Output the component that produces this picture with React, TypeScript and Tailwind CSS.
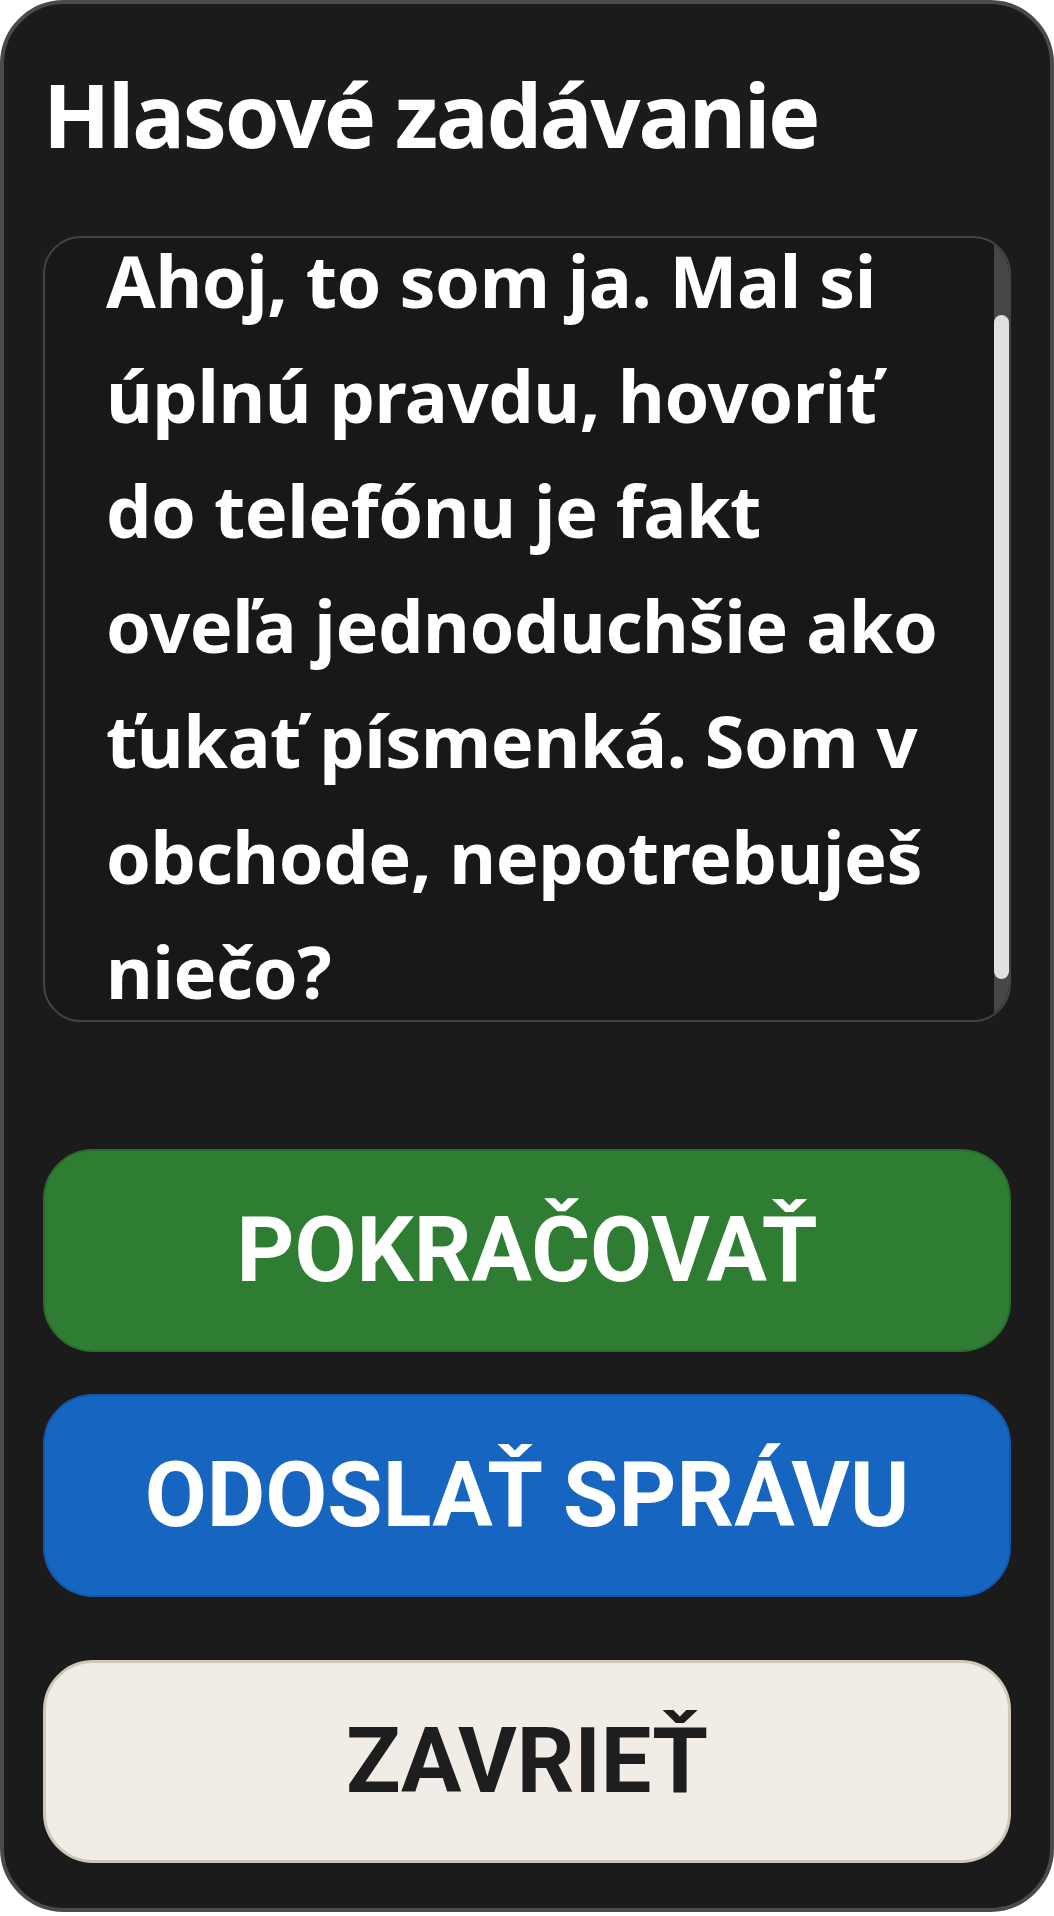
import React from "react";

export default function App() {
  const lines = [
    "Ahoj, to som ja. Mal si",
    "úplnú pravdu, hovoriť",
    "do telefónu je fakt",
    "oveľa jednoduchšie ako",
    "ťukať písmenká. Som v",
    "obchode, nepotrebuješ",
    "niečo?",
  ];
  return (
    <div className="w-[1054px] h-[1916px] bg-white">
      <div className="w-[1054px] h-[1912px] rounded-[64px] border-[4px] border-[#4a4a4a] bg-[#1b1b1b] px-[39px] pt-[58px] flex flex-col font-['Noto_Sans',sans-serif]">
        <h1 className="text-[88px] leading-[1.2] tracking-[-0.025em] font-bold text-white whitespace-nowrap">
          Hlasové zadávanie
        </h1>
        <div className="relative mt-[68px] h-[786px] rounded-[38px] border-2 border-[#434343] bg-[#181818] overflow-hidden">
          <div className="-mt-[15px] pl-[61px] text-[72px] leading-[1.6] tracking-[-0.006em] font-bold text-white whitespace-nowrap">
            {lines.map((l, i) => (
              <div key={i}>{l}</div>
            ))}
          </div>
          <div className="absolute right-0 top-0 bottom-0 w-[15px] bg-[#474747]">
            <div className="absolute left-0 right-0 top-[77px] h-[664px] rounded-full bg-[#e0e0e0]" />
          </div>
        </div>
        <button className="mt-[127px] h-[203px] w-full rounded-[50px] border-2 border-[#2a6b2e] bg-[#2e7d32] flex items-center justify-center font-['Roboto',sans-serif] font-bold text-[90px] text-white">
          POKRAČOVAŤ
        </button>
        <button className="mt-[42px] h-[203px] w-full rounded-[50px] border-2 border-[#1257ab] bg-[#1665c1] flex items-center justify-center font-['Roboto',sans-serif] font-bold text-[90px] text-white">
          ODOSLAŤ SPRÁVU
        </button>
        <button className="mt-[63px] h-[203px] w-full rounded-[50px] border-[3px] border-[#cfc7b7] bg-[#f1ede6] flex items-center justify-center font-['Roboto',sans-serif] font-bold text-[90px] text-[#1e1e1e]">
          ZAVRIEŤ
        </button>
      </div>
    </div>
  );
}
